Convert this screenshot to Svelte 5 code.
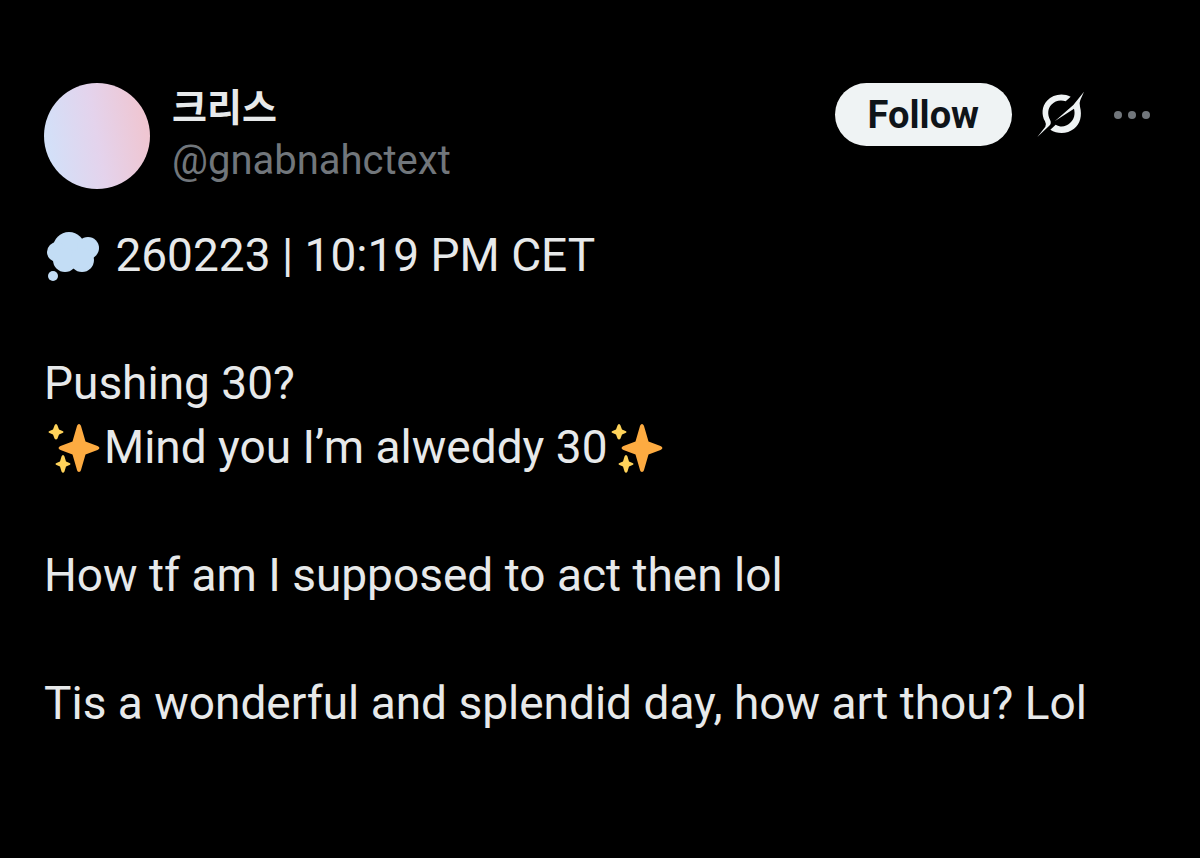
<script lang="ts">
    const name = '크리스';
    const handle = '@gnabnahctext';

    type Part = { emoji?: 'thought' | 'sparkles'; text?: string };

    const lines: Part[][] = [
        [{ emoji: 'thought' }, { text: ' 260223 | 10:19 PM CET' }],
        [],
        [{ text: 'Pushing 30?' }],
        [{ emoji: 'sparkles' }, { text: 'Mind you I’m alweddy 30' }, { emoji: 'sparkles' }],
        [],
        [{ text: 'How tf am I supposed to act then lol' }],
        [],
        [{ text: 'Tis a wonderful and splendid day, how art thou? Lol' }],
    ];

    let following = false;
</script>

<article class="post">
    <header class="header">
        <div class="avatar"></div>
        <div class="author">
            <a class="name" href="#profile">{name}</a>
            <a class="handle" href="#profile">{handle}</a>
        </div>
        <div class="actions">
            <button class="follow" on:click={() => (following = !following)}>
                {following ? 'Following' : 'Follow'}
            </button>
            <button class="icon-button" aria-label="Explain this post">
                <svg width="48" height="48" viewBox="24 15 144 144" fill="#eff3f4" overflow="visible">
                    <path d="M22 153 L46 122 Q50 115 45 106 C34 87 35 61 51 44 C69 24 99 20 122 32 L107 46 C92 40 75 44 64 56 C53 68 52 85 60 101 Q66 112 57 120 Z" />
                    <path d="M162 17 L151 42 Q147 51 150 62 C157 88 151 113 132 128 C112 144 83 145 61 131 L77 116 C92 125 108 122 120 111 C133 99 136 84 132 68 L75 105 L130 57 Z" />
                </svg>
            </button>
            <button class="icon-button" aria-label="More">
                <svg width="40" height="12" viewBox="0 0 40 12" fill="#71767b">
                    <circle cx="6" cy="6" r="4" />
                    <circle cx="20" cy="6" r="4" />
                    <circle cx="34" cy="6" r="4" />
                </svg>
            </button>
        </div>
    </header>

    <div class="body">
        {#each lines as line}
            <p class="line">
                {#each line as part}
                    {#if part.emoji === 'thought'}
                        <svg class="emoji" viewBox="0 0 54 54" fill="#c3ddf5" role="img" aria-label="Thought balloon">
                            <circle cx="22" cy="19" r="16" />
                            <circle cx="41" cy="19" r="11" />
                            <circle cx="10" cy="23" r="10" />
                            <circle cx="18" cy="31" r="12" />
                            <circle cx="35" cy="31" r="12" />
                            <circle cx="6" cy="47" r="5" />
                        </svg>
                    {:else if part.emoji === 'sparkles'}
                        <svg class="emoji" viewBox="0 0 54 54" role="img" aria-label="Sparkles">
                            <path fill="#fdab41" d="M32 3 C33 3 33.600 4 34 5 L38.500 20.500 L50.500 25 C53 26 53 28 50.500 29 L38.500 33.500 L34 49 C33.500 51.500 30.500 51.500 30 49 L25.500 33.500 L13.500 29 C11 28 11 26 13.500 25 L25.500 20.500 L30 5 C30.400 4 31 3 32 3 Z" />
                            <path fill="#ffd35a" d="M9 3 Q10 3 10.500 4.500 L12 8.500 L15.500 10 Q17.500 11 15.500 12 L12 13.500 L10.500 17.500 Q9 19.500 7.500 17.500 L6 13.500 L2.500 12 Q.5 11 2.500 10 L6 8.500 L7.500 4.500 Q8 3 9 3 Z" />
                            <path fill="#ffd35a" d="M16 34 Q17 34 17.500 35.500 L19 40.500 L22.500 42 Q24.500 43 22.500 44 L19 45.500 L17.500 50.500 Q16 53 14.500 50.500 L13 45.500 L9.500 44 Q7.500 43 9.500 42 L13 40.500 L14.500 35.500 Q15 34 16 34 Z" />
                        </svg>
                    {:else}{part.text}{/if}
                {/each}
            </p>
        {/each}
    </div>
</article>

<style>
    :global(body) {
        background: #000;
    }

    .post {
        padding: 83px 48px 83px 44px;
        color: #e7e9ea;
        font-family: Roboto, 'Noto Sans CJK KR', sans-serif;
    }

    .header {
        display: flex;
        align-items: flex-start;
    }

    .avatar {
        flex: none;
        width: 106px;
        height: 106px;
        border-radius: 50%;
        background: linear-gradient(80deg, #cfe3fb 0%, #e4d3ec 50%, #efc6d2 90%);
    }

    .author {
        display: flex;
        flex-direction: column;
        flex: 1;
        margin-left: 22px;
    }

    .author a {
        text-decoration: none;
    }

    .name {
        color: #e7e9ea;
        font-size: 38px;
        font-weight: 700;
        line-height: 50px;
    }

    .handle {
        color: #71767b;
        font-size: 40px;
        line-height: 56px;
    }

    .actions {
        display: flex;
        align-items: center;
        gap: 26px;
    }

    button {
        border: 0;
        font-family: inherit;
        cursor: pointer;
    }

    .follow {
        height: 63px;
        padding: 0 33px;
        border-radius: 32px;
        background: #eff3f4;
        color: #0f1419;
        font-size: 38px;
        font-weight: 700;
    }

    .icon-button {
        display: flex;
        padding: 0;
        background: none;
    }

    .body {
        margin-top: 34px;
        font-size: 46px;
        line-height: 64px;
    }

    .line {
        min-height: 64px;
        margin: 0;
        white-space: pre-wrap;
    }

    .emoji {
        width: 54px;
        height: 54px;
        margin: 0 3px;
        vertical-align: -12px;
    }
</style>
